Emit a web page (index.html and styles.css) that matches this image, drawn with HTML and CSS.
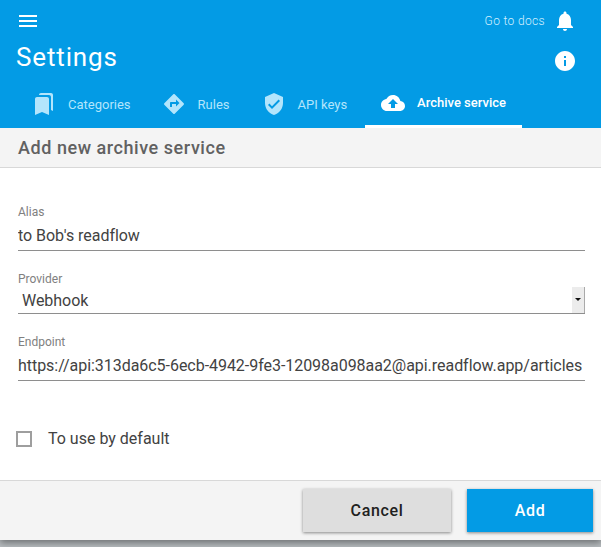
FILE: index.html
```html
<!DOCTYPE html>
<html lang="en">
<head>
  <meta charset="UTF-8">
  <meta name="viewport" content="width=device-width, initial-scale=1.0">
  <title>Settings</title>
  <link rel="stylesheet" href="styles.css">
</head>
<body>
  <div class="page">
    <header class="appbar">
      <div class="appbar-top">
        <svg class="icon" viewBox="0 0 24 24"><path d="M3 18h18v-2H3v2zm0-5h18v-2H3v2zm0-7v2h18V6H3z"/></svg>
        <div class="appbar-right">
          <a class="docs-link">Go to docs</a>
          <svg class="icon" viewBox="0 0 24 24"><path d="M12 22c1.1 0 2-.9 2-2h-4c0 1.1.89 2 2 2zm6-6v-5c0-3.07-1.64-5.64-4.5-6.32V4c0-.83-.67-1.5-1.5-1.5s-1.5.67-1.5 1.5v.68C7.63 5.36 6 7.92 6 11v5l-2 2v1h16v-1l-2-2z"/></svg>
        </div>
      </div>
      <div class="appbar-title">
        <h1>Settings</h1>
        <svg class="icon info-icon" viewBox="0 0 24 24"><path d="M12 2C6.48 2 2 6.48 2 12s4.48 10 10 10 10-4.48 10-10S17.52 2 12 2zm1 15h-2v-6h2v6zm0-8h-2V7h2v2z"/></svg>
      </div>
      <nav class="tabs">
        <a class="tab">
          <svg class="icon" viewBox="0 0 24 24"><path d="M19 18l2 1V3c0-1.1-.9-2-2-2H8.99C7.89 1 7 1.9 7 3h10c1.1 0 2 .9 2 2v13zM15 5H5c-1.1 0-2 .9-2 2v16l7-3 7 3V7c0-1.1-.9-2-2-2z"/></svg>
          Categories
        </a>
        <a class="tab">
          <svg class="icon" viewBox="0 0 24 24"><path d="M21.71 11.29l-9-9c-.39-.39-1.02-.39-1.41 0l-9 9c-.39.39-.39 1.02 0 1.41l9 9c.39.39 1.02.39 1.41 0l9-9c.39-.38.39-1.01 0-1.41zM14 14.5V12h-4v3H8v-4c0-.55.45-1 1-1h5V7.5l3.5 3.5-3.5 3.5z"/></svg>
          Rules
        </a>
        <a class="tab">
          <svg class="icon" viewBox="0 0 24 24"><path d="M12 1L3 5v6c0 5.55 3.84 10.74 9 12 5.16-1.26 9-6.45 9-12V5l-9-4zm-2 16l-4-4 1.41-1.41L10 14.17l6.59-6.59L18 9l-8 8z"/></svg>
          API keys
        </a>
        <a class="tab tab-active">
          <svg class="icon" viewBox="0 0 24 24"><path d="M19.35 10.04C18.67 6.59 15.64 4 12 4 9.11 4 6.6 5.64 5.35 8.04 2.34 8.36 0 10.91 0 14c0 3.31 2.69 6 6 6h13c2.76 0 5-2.24 5-5 0-2.64-2.05-4.78-4.65-4.96zM14 13v4h-4v-4H7l5-5 5 5h-3z"/></svg>
          Archive service
        </a>
      </nav>
    </header>

    <form class="panel">
      <h2 class="panel-title">Add new archive service</h2>
      <div class="panel-body">
        <label class="field">
          <span class="field-label">Alias</span>
          <input class="field-input" type="text" value="to Bob's readflow">
        </label>
        <label class="field">
          <span class="field-label">Provider</span>
          <span class="select-wrap">
            <select class="field-input field-select">
              <option>Webhook</option>
            </select>
            <span class="select-arrow"></span>
          </span>
        </label>
        <label class="field">
          <span class="field-label">Endpoint</span>
          <input class="field-input" type="text" value="https://api:313da6c5-6ecb-4942-9fe3-12098a098aa2@api.readflow.app/articles">
        </label>
        <label class="check-row">
          <span class="checkbox"></span>
          To use by default
        </label>
      </div>
      <footer class="panel-footer">
        <button class="btn" type="button">Cancel</button>
        <button class="btn btn-primary" type="button">Add</button>
      </footer>
    </form>
  </div>
</body>
</html>
```

FILE: styles.css
```css
html, body {
  margin: 0;
  height: 100%;
}

body {
  background-color: #b8bdc0;
  font-family: Roboto, "Liberation Sans", sans-serif;
  color: #424242;
}

.page {
  display: flex;
  flex-direction: column;
  height: 540px;
  background-color: #fff;
  box-shadow: 0 3px 7px rgba(0, 0, 0, 0.4);
}

.icon {
  display: block;
  width: 24px;
  height: 24px;
  fill: currentColor;
  flex-shrink: 0;
}

.appbar {
  height: 128px;
  background-color: #039be5;
  color: #fff;
}

.appbar-top {
  display: flex;
  justify-content: space-between;
  align-items: center;
  height: 24px;
  padding: 9px 24px 0 16px;
}

.appbar-right {
  display: flex;
  align-items: center;
  gap: 8px;
}

.docs-link {
  font-size: 12px;
  font-weight: 300;
  letter-spacing: 0.35px;
  color: #d4f0ff;
}

.appbar-title {
  display: flex;
  justify-content: space-between;
  align-items: flex-start;
  height: 47px;
  padding-right: 24px;
  padding-left: 16px;
}

h1 {
  margin: 9px 0 0;
  font-size: 26px;
  line-height: 30px;
  font-weight: 400;
  letter-spacing: 0.85px;
}

.info-icon {
  margin-top: 16px;
}

.tabs {
  display: flex;
  height: 48px;
  padding-left: 16px;
}

.tab {
  display: flex;
  align-items: center;
  gap: 12px;
  padding: 0 16px;
  font-size: 13px;
  color: #b3e5fc;
}

.tab:first-child {
  padding-right: 15px;
}

.tab-active {
  margin-left: 2px;
  color: #fff;
  font-weight: 500;
  border-bottom: 3px solid #fff;
  box-sizing: border-box;
}

.panel {
  flex: 1;
  display: flex;
  flex-direction: column;
}

.panel-title {
  margin: 0;
  height: 39px;
  line-height: 39px;
  padding-left: 18px;
  font-size: 18px;
  font-weight: 500;
  letter-spacing: 0.55px;
  color: #616161;
  background-color: #f4f4f4;
  border-bottom: 1px solid #d8d8d8;
}

.panel-body {
  flex: 1;
  display: flex;
  flex-direction: column;
  gap: 21px;
  padding: 37px 16px 0 18px;
}

.field {
  display: block;
}

.field-label {
  display: block;
  font-size: 12px;
  color: #808080;
}

.field-input {
  display: block;
  box-sizing: border-box;
  width: 100%;
  height: 32px;
  padding: 2px 0 0;
  border: 0;
  border-bottom: 1px solid #8e8e8e;
  border-radius: 0;
  outline: none;
  font-family: inherit;
  font-size: 16px;
  letter-spacing: -0.04px;
  color: #424242;
  background: transparent;
}

.select-wrap {
  display: block;
  position: relative;
}

.field-select {
  appearance: none;
  height: 28px;
  padding-left: 4px;
}

.select-arrow {
  position: absolute;
  right: 0;
  top: 1px;
  width: 13px;
  height: 26px;
  background-color: #ececec;
  border-right: 1px solid #aaa;
  box-sizing: border-box;
}

.select-arrow::after {
  content: "";
  position: absolute;
  left: 3px;
  top: 11px;
  border: 3px solid transparent;
  border-top: 3px solid #111;
  border-bottom: 0;
}

.check-row {
  display: flex;
  align-items: center;
  gap: 16px;
  margin-top: 27px;
  margin-left: -2px;
  font-size: 16px;
  color: #424242;
}

.checkbox {
  box-sizing: border-box;
  width: 16px;
  height: 16px;
  border: 2px solid #9e9e9e;
}

.panel-footer {
  display: flex;
  justify-content: flex-end;
  gap: 16px;
  height: 60px;
  box-sizing: border-box;
  padding: 8px 8px 0 0;
  background-color: #f4f4f4;
  border-top: 1px solid #d8d8d8;
}

.btn {
  width: 148px;
  height: 43px;
  border: 0;
  font-family: inherit;
  font-size: 16px;
  font-weight: 500;
  letter-spacing: 0.65px;
  color: #212121;
  background-color: #dedede;
  box-shadow: 0 1px 3px rgba(0, 0, 0, 0.45);
}

.btn-primary {
  width: 126px;
  color: #fff;
  background-color: #039be5;
}
```
